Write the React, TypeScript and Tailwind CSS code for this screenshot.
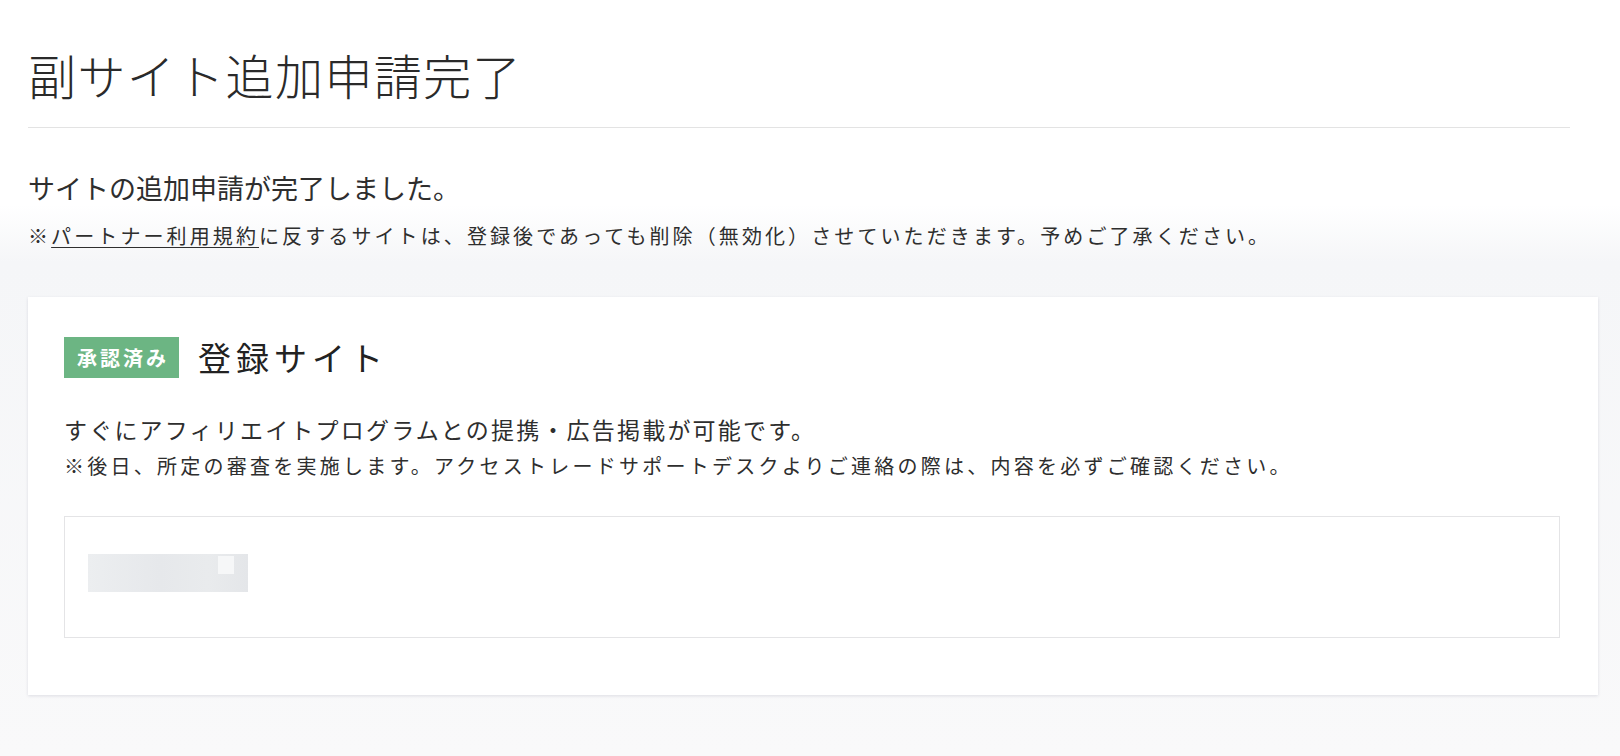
import React from "react";

const jp = { fontFamily: '"Noto Sans CJK JP", "Noto Sans", sans-serif' };

export default function App() {
  return (
    <div
      className="min-h-screen w-full bg-[linear-gradient(to_bottom,#ffffff_0px,#ffffff_205px,#f5f6f8_262px,#f9f9fa_756px)] text-[#2e2e2e]"
      style={jp}
    >
      <div className="pl-[28px] pr-[22px] pt-[50px] pb-[62px]">
        <header className="mr-[28px]">
          <h1 className="text-[48px] leading-[48px] tracking-[1.4px] font-light text-[#2a2a2a]">
            副サイト追加申請完了
          </h1>
          <div className="mt-[29px] h-px bg-[#e3e3e3]" />
          <p className="mt-[46px] text-[27px] leading-[27px] text-[#2e2e2e]">
            サイトの追加申請が完了しました。
          </p>
          <p className="mt-[25px] text-[20px] leading-[20px] tracking-[3.1px] text-[#2e2e2e]">
            ※<a className="underline underline-offset-[3px] decoration-1 text-[#2e2e2e]" href="#">パートナー利用規約</a>
            に反するサイトは、登録後であっても削除（無効化）させていただきます。予めご了承ください。
          </p>
        </header>

        <section className="mt-[51px] bg-white pl-[36px] pr-[38px] pt-[40px] pb-[57px] shadow-[0_1px_3px_rgba(40,40,80,0.13)]">
          <div className="flex items-center gap-[19px]">
            <span className="flex h-[41px] w-[115px] items-center justify-center bg-[#6cb583] pl-[3px] text-[20px] font-bold leading-none tracking-[3px] text-white">
              承認済み
            </span>
            <h2 className="text-[33px] leading-[41px] tracking-[5px] text-[#222]">登録サイト</h2>
          </div>
          <p className="mt-[40px] text-[23px] leading-[23px] tracking-[2.2px] text-[#2e2e2e]">
            すぐにアフィリエイトプログラムとの提携・広告掲載が可能です。
          </p>
          <p className="mt-[15px] text-[20px] leading-[20px] tracking-[3.25px] text-[#2e2e2e]">
            ※後日、所定の審査を実施します。アクセストレードサポートデスクよりご連絡の際は、内容を必ずご確認ください。
          </p>
          <div className="mt-[40px] h-[122px] border border-[#e4e4e6] pl-[23px] pt-[37px]">
            <div className="relative h-[38px] w-[160px] overflow-hidden bg-[linear-gradient(to_right,#eceef0,#e6e8eb_45%,#e9ebed_75%,#e4e6e9)]">
              <div className="absolute right-[14px] top-[2px] h-[18px] w-[16px] bg-[#f6f7f8]" />
            </div>
          </div>
        </section>
      </div>
    </div>
  );
}
